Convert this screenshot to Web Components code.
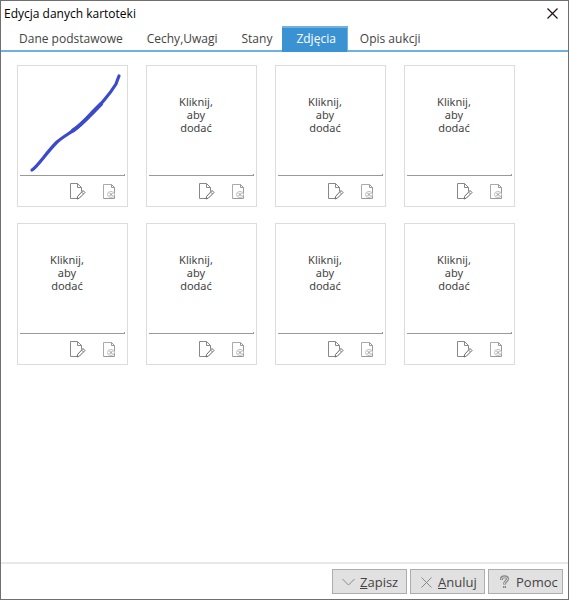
<!DOCTYPE html>
<html lang="pl">
<head>
<meta charset="utf-8">
<title>Edycja danych kartoteki</title>
<style>
  :root {
    --frame: #6f6f6f;
    --blue: #3a92d3;
    --light-blue: #6fb1e0;
    --text: #444;
    --line: #dcdcdc;
  }

  body {
    margin: 0;
    background: #fff;
    color: var(--text);
    font: 12px/16px "Open Sans", "Noto Sans", sans-serif;
  }
</style>
</head>
<body>
<record-dialog>
  <tab-strip slot="tabs">
    <tab-item>Dane podstawowe</tab-item>
    <tab-item>Cechy,Uwagi</tab-item>
    <tab-item>Stany</tab-item>
    <tab-item selected>Zdjęcia</tab-item>
    <tab-item>Opis aukcji</tab-item>
  </tab-strip>

  <photo-grid>
    <photo-card>
      <svg width="105" height="108" viewBox="0 0 105 108" role="img" aria-label="Zdjęcie 1">
        <g fill="none" stroke="#3b49cb" stroke-linecap="round" stroke-linejoin="round">
          <path d="M12 102C18 98 26 85 37 74C45 67 53 64 61 56Q73 46 85 31Q91 24 96 16Q97 13 99 8" stroke-width="3.2"/>
          <path d="M53 62.500Q60 58 72 45L81 36" stroke-width="4"/>
        </g>
      </svg>
    </photo-card>
    <photo-card></photo-card>
    <photo-card></photo-card>
    <photo-card></photo-card>
    <photo-card></photo-card>
    <photo-card></photo-card>
    <photo-card></photo-card>
    <photo-card></photo-card>
  </photo-grid>

  <dialog-button slot="actions" icon="check"><u>Z</u>apisz</dialog-button>
  <dialog-button slot="actions" icon="cross"><u>A</u>nuluj</dialog-button>
  <dialog-button slot="actions" icon="help">Pomoc</dialog-button>
</record-dialog>

<script>
class RecordDialog extends HTMLElement {
  constructor() {
    super()
    this.attachShadow({ mode: "open" })
  }

  static get styles() {
    return `
      :host {
        display: flex;
        flex-direction: column;
        box-sizing: border-box;
        min-height: 100vh;
        border: 1px solid var(--frame);
      }

      .dialog__header {
        display: flex;
        justify-content: space-between;
        align-items: center;
        height: 25px;
        padding: 0 7px 0 3px;
      }

      .dialog__title {
        margin: 0;
        color: #000;
        font-size: 12px;
        font-weight: 400;
      }

      .dialog__close {
        display: flex;
        padding: 3px;
        border: 0;
        background: none;
      }

      .dialog__main {
        flex: 1;
      }

      .dialog__footer {
        display: flex;
        justify-content: flex-end;
        gap: 3px;
        padding: 5px;
        border-top: 2px solid #e9e9e9;
      }
    `
  }

  connectedCallback() {
    this.render()
  }

  render() {
    this.shadowRoot.innerHTML = `
      <style>${RecordDialog.styles}</style>
      <header class="dialog__header">
        <h1 class="dialog__title">Edycja danych kartoteki</h1>
        <button class="dialog__close" type="button" aria-label="Zamknij">
          <svg width="11" height="11" viewBox="0 0 11 11"><path d="M.5.5l10 10M10.500.5l-10 10" stroke="#201018" stroke-width="1.2"/></svg>
        </button>
      </header>
      <slot name="tabs"></slot>
      <main class="dialog__main"><slot></slot></main>
      <footer class="dialog__footer"><slot name="actions"></slot></footer>
    `
  }
}

class TabStrip extends HTMLElement {
  constructor() {
    super()
    this.attachShadow({ mode: "open" })
  }

  connectedCallback() {
    this.shadowRoot.innerHTML = `
      <style>
        :host {
          display: block;
          border-bottom: 2px solid var(--light-blue);
        }

        .tabs {
          display: flex;
          padding-left: 6px;
        }
      </style>
      <nav class="tabs"><slot></slot></nav>
    `
  }
}

class TabItem extends HTMLElement {
  constructor() {
    super()
    this.attachShadow({ mode: "open" })
  }

  connectedCallback() {
    this.shadowRoot.innerHTML = `
      <style>
        :host {
          display: block;
        }

        .tab {
          display: block;
          height: 24px;
          padding: 1px 12px 0;
          border: 0;
          background: none;
          color: inherit;
          font: inherit;
        }

        :host([selected]) {
          margin: 0 0 -2px -2px;
        }

        :host([selected]) .tab {
          height: 26px;
          padding: 1px 12px 2px 14px;
          background: var(--blue);
          box-shadow: inset 0 2px var(--light-blue), inset -1px 0 var(--light-blue);
          color: #fff;
        }
      </style>
      <button class="tab" type="button"><slot></slot></button>
    `
  }
}

class PhotoGrid extends HTMLElement {
  constructor() {
    super()
    this.attachShadow({ mode: "open" })
  }

  connectedCallback() {
    this.shadowRoot.innerHTML = `
      <style>
        :host {
          display: grid;
          grid-template-columns: repeat(auto-fill, 111px);
          gap: 16px 18px;
          padding: 13px 16px;
        }
      </style>
      <slot></slot>
    `
  }
}

class PhotoCard extends HTMLElement {
  constructor() {
    super()
    this.attachShadow({ mode: "open" })
  }

  static get styles() {
    return `
      :host {
        display: block;
        padding: 2px;
        border: 1px solid var(--line);
      }

      .card__photo {
        display: flex;
        align-items: center;
        width: 100%;
        height: 108px;
        padding: 0;
        border: 0;
        border-bottom: 1px solid #999;
        background: linear-gradient(#999, #999) right bottom / 1px 1px no-repeat;
        color: inherit;
        font: 11px/13px "Noto Sans", "Open Sans", sans-serif;
      }

      .card__hint {
        display: block;
        width: 42px;
        margin: 0 0 14px 26px;
        text-align: center;
      }

      .card__tools {
        display: flex;
        justify-content: flex-end;
        gap: 16px;
        padding: 7px 8px 4px 0;
      }

      .card__tool {
        display: flex;
        padding: 0;
        border: 0;
        background: none;
      }
    `
  }

  connectedCallback() {
    this.render()
  }

  render() {
    this.shadowRoot.innerHTML = `
      <style>${PhotoCard.styles}</style>
      <button class="card__photo" type="button">
        <slot><span class="card__hint">Kliknij, aby dodać</span></slot>
      </button>
      <div class="card__tools">
        <button class="card__tool" type="button" aria-label="Edytuj">
          <svg width="17" height="17" viewBox="0 0 17 17" fill="none" stroke="#888">
            <path d="M7.500.5H.5v15H7M7.500.5l4 4v4M7.500.5v4h4"/>
            <path d="M13 7.500l2 2-5.500 5.500-2.500 1 .7-2.700z" stroke="#666"/>
            <path d="M11.500 9l2 2"/>
          </svg>
        </button>
        <button class="card__tool" type="button" aria-label="Usuń">
          <svg width="14" height="17" viewBox="0 0 14 17" fill="none" stroke="#999">
            <path d="M8.500 1.500h-8v14" stroke="#aaa"/>
            <path d="M.5 15.500h11V4.500l-3-3v3h3"/>
            <ellipse cx="8" cy="11.500" rx="3.500" ry="3" fill="#fff" stroke="#bbb"/>
            <path d="M6.500 10l3 3M9.500 10l-3 3"/>
          </svg>
        </button>
      </div>
    `
  }
}

class DialogButton extends HTMLElement {
  constructor() {
    super()
    this.attachShadow({ mode: "open" })
  }

  static get icons() {
    return {
      check: `<path d="M.5 4l6 6 6-6"/>`,
      cross: `<path d="M1.500 2.500l10 10M11.500 2.500l-10 10"/>`,
      help: `
        <path d="M3.500 5V4C3.500 1 9.500 1 9.500 4 9.500 6 6.500 6 6.500 9.500M6.500 11v2" stroke-width="3"/>
        <path d="M3.500 4.500V4C3.500 1.500 9.500 1.500 9.500 4 9.500 6 6.500 6 6.500 9M6.500 11.500v1" stroke="#e1e1e1"/>`
    }
  }

  connectedCallback() {
    this.shadowRoot.innerHTML = `
      <style>
        :host {
          display: block;
        }

        .button {
          display: flex;
          align-items: center;
          gap: 5px;
          box-sizing: border-box;
          width: 75px;
          height: 25px;
          padding: 0 0 0 9px;
          border: 1px solid #adadad;
          background: #e1e1e1;
          color: inherit;
          font: 13px/16px "Open Sans", "Noto Sans", sans-serif;
        }
      </style>
      <button class="button" type="button">
        <svg width="13" height="14" viewBox="0 0 13 14" fill="none" stroke="#888" aria-hidden="true">${DialogButton.icons[this.getAttribute("icon")]}</svg>
        <span><slot></slot></span>
      </button>
    `
  }
}

customElements.define("record-dialog", RecordDialog)
customElements.define("tab-strip", TabStrip)
customElements.define("tab-item", TabItem)
customElements.define("photo-grid", PhotoGrid)
customElements.define("photo-card", PhotoCard)
customElements.define("dialog-button", DialogButton)
</script>
</body>
</html>
